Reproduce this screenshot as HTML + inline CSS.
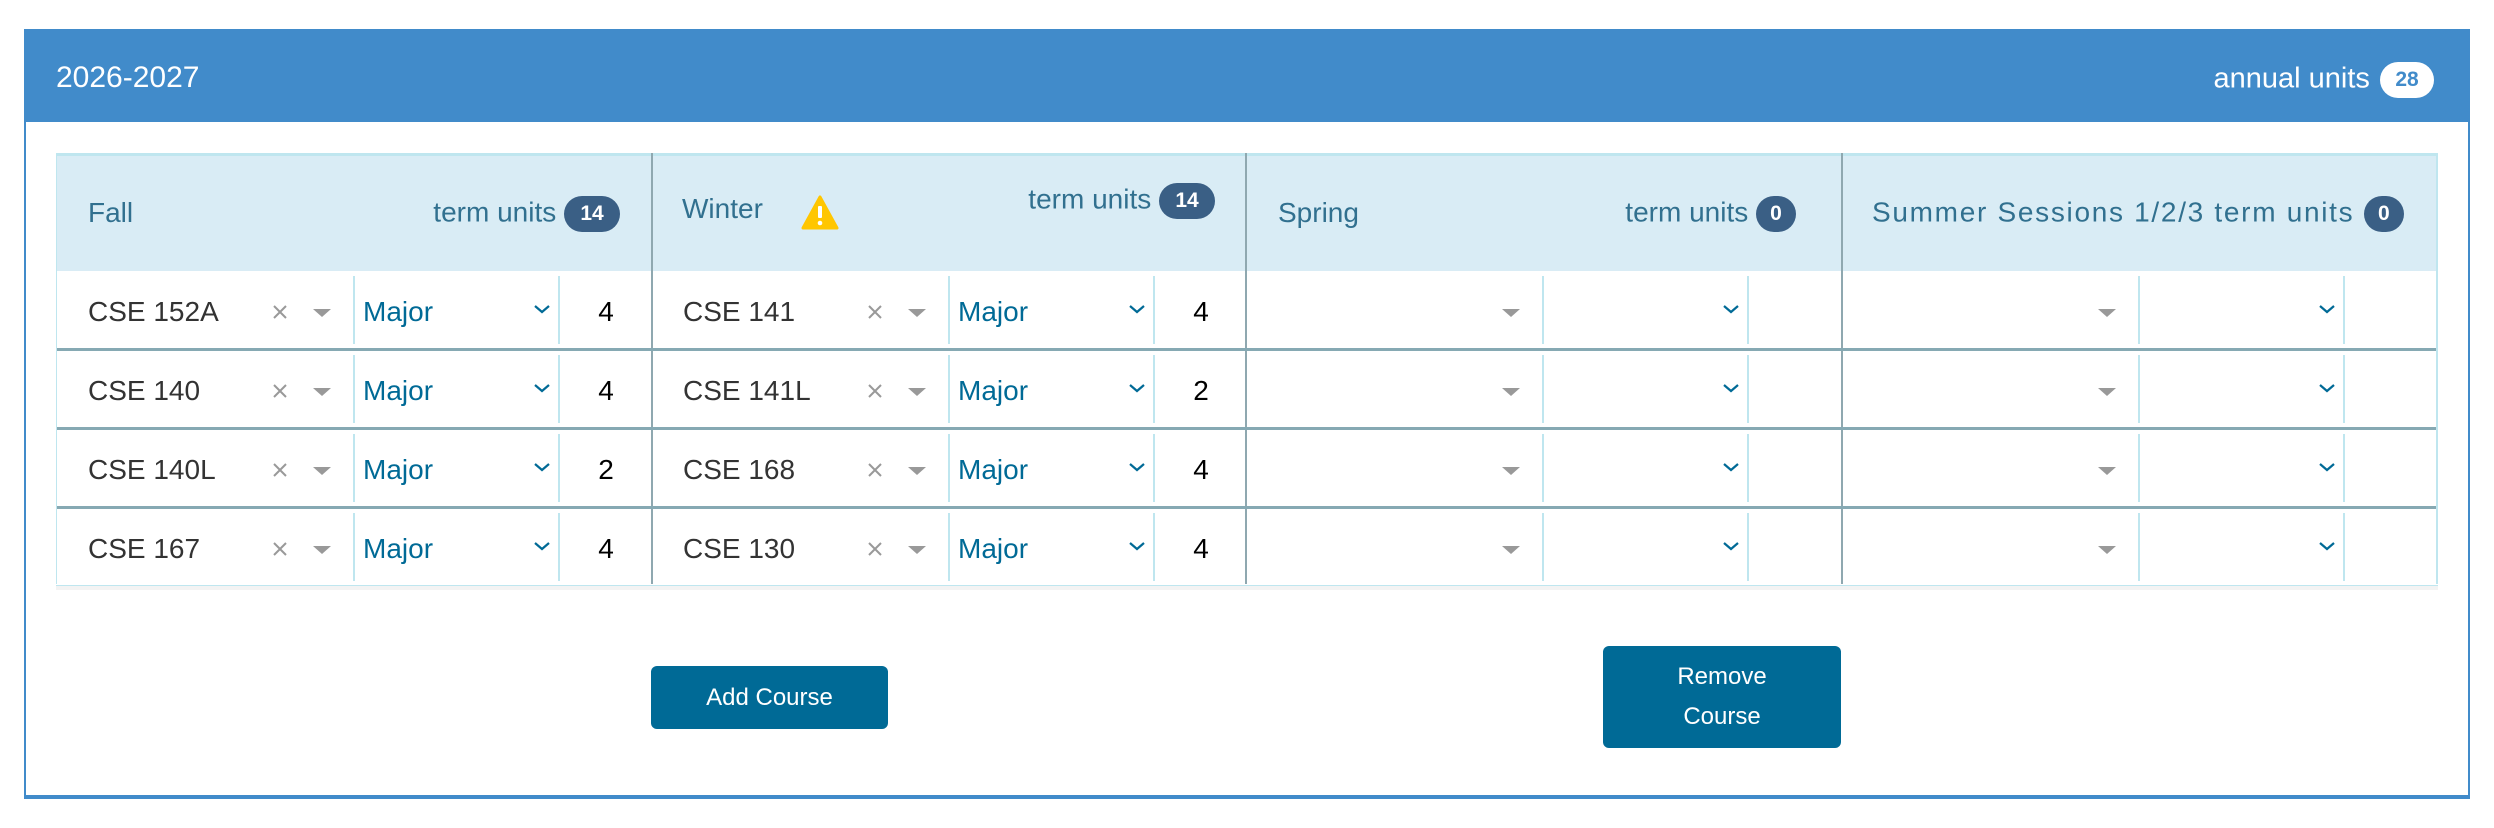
<!DOCTYPE html>
<html><head><meta charset="utf-8"><style>
*{box-sizing:border-box;margin:0;padding:0}
body{width:2494px;height:828px;background:#fff;font-family:"Liberation Sans",sans-serif;position:relative;overflow:hidden}
.a{position:absolute}
.panel{left:24px;top:29px;width:2446px;height:770px;border:2px solid #418bca;border-top:none;border-bottom:4px solid #418bca}
.hdr{left:24px;top:29px;width:2446px;height:93px;background:#418bca;color:#fff}
.badge{display:inline-block;border-radius:18px;font-weight:bold;font-size:21px;text-align:center;line-height:36px;height:36px;min-width:28px;padding:0 8px;vertical-align:middle;letter-spacing:0}
.dk{background:#3a5f85;color:#fff}
.th{background:#d9ecf5;color:#31708f;font-size:28px;white-space:nowrap}
.cell{font-size:28px}
.crs{color:#333}
.maj{color:#006a96}
.num{color:#000}
.tri{width:0;height:0;border-left:9px solid transparent;border-right:9px solid transparent;border-top:8px solid #999}
.btn{background:#006a96;color:#fff;border-radius:6px;font-size:24px;text-align:center}
</style></head><body>
<div class="a panel"></div>
<div class="a hdr">
  <div class="a" style="left:32px;top:32px;font-size:30px">2026-2027</div>
  <div class="a" style="right:36px;top:33px;font-size:29px">annual units <span class="badge" style="background:#fff;color:#418bca;margin-left:2px;min-width:54px">28</span></div>
</div>
<div class="a th" style="left:56px;top:153px;width:2382px;height:118px;border-top:3px solid #bfe6ef;border-left:1px solid #bfe6ef;border-right:2px solid #bfe6ef"></div>
<div class="a" style="left:651px;top:153px;width:2px;height:431px;background:#8fa8b0"></div>
<div class="a" style="left:1245px;top:153px;width:2px;height:431px;background:#8fa8b0"></div>
<div class="a" style="left:1841px;top:153px;width:2px;height:431px;background:#8fa8b0"></div>
<div class="a th" style="left:88px;top:197px;background:none">Fall</div>
<div class="a th" style="right:1874px;top:196px;background:none">term units <span class="badge dk" style="width:56px">14</span></div>
<div class="a th" style="left:682px;top:193px;background:none">Winter</div>
<svg class="a" style="left:801px;top:195px" width="38" height="35" viewBox="0 0 38 35"><path d="M19 2 L36 33 L2 33 Z" fill="#ffc600" stroke="#ffc600" stroke-width="3" stroke-linejoin="round"/><rect x="17" y="11" width="4" height="12" rx="1" fill="#fff"/><circle cx="19" cy="28" r="2.3" fill="#fff"/></svg>
<div class="a th" style="right:1279px;top:183px;background:none">term units <span class="badge dk" style="width:56px">14</span></div>
<div class="a th" style="left:1278px;top:197px;background:none">Spring</div>
<div class="a th" style="right:698px;top:196px;background:none">term units <span class="badge dk" style="padding:0;min-width:40px">0</span></div>
<div class="a th" style="left:1872px;top:196px;background:none;letter-spacing:1.7px">Summer Sessions 1/2/3 term units <span class="badge dk" style="padding:0;min-width:40px">0</span></div>
<div id="rows"></div>
<script>
var data=[[["CSE 152A",4],["CSE 141",4]],[["CSE 140",4],["CSE 141L",2]],[["CSE 140L",2],["CSE 168",4]],[["CSE 167",4],["CSE 130",4]]];
var tops=[270,349,428,507],h='';
var cols=[56,651,1245,1841];
for(var r=0;r<4;r++){var t=tops[r];
 h+='<div class="a" style="left:56px;top:'+(t+78)+'px;width:2382px;height:3px;background:'+(r<3?'#86a9b3':'#bfe6ef')+'"></div>';
 for(var c=0;c<4;c++){var L=cols[c];
  h+='<div class="a" style="left:'+(L+297)+'px;top:'+(t+6)+'px;width:2px;height:68px;background:#bfe6ef"></div>';
  h+='<div class="a" style="left:'+(L+502)+'px;top:'+(t+6)+'px;width:2px;height:68px;background:#bfe6ef"></div>';
  h+='<div class="a tri" style="left:'+(L+257)+'px;top:'+(t+39)+'px"></div>';
  h+='<svg class="a" style="left:'+(L+477)+'px;top:'+(t+34)+'px" width="18" height="10"><path d="M2 2 L9 8 L16 2" fill="none" stroke="#006a96" stroke-width="2.2"/></svg>';
  if(c<2){var d=data[r][c];
   h+='<div class="a cell crs" style="left:'+(L+32)+'px;top:'+(t+26)+'px">'+d[0]+'</div>';
   h+='<svg class="a" style="left:'+(L+217)+'px;top:'+(t+35)+'px" width="14" height="14"><path d="M1 1 L13 13 M13 1 L1 13" stroke="#999" stroke-width="2"/></svg>';
   h+='<div class="a cell maj" style="left:'+(L+307)+'px;top:'+(t+26)+'px">Major</div>';
   h+='<div class="a cell num" style="left:'+(L+504)+'px;width:92px;text-align:center;top:'+(t+26)+'px">'+d[1]+'</div>';
  }
 }
}
h+='<div class="a" style="left:56px;top:270px;width:1px;height:314px;background:#bfe6ef"></div><div class="a" style="left:2436px;top:270px;width:2px;height:314px;background:#bfe6ef"></div>';
h+='<div class="a" style="left:56px;top:586px;width:2382px;height:4px;background:#f3f3f3"></div>';
document.getElementById('rows').innerHTML=h;
</script>
<div class="a btn" style="left:651px;top:666px;width:237px;height:63px;line-height:63px">Add Course</div>
<div class="a btn" style="left:1603px;top:646px;width:238px;height:102px;padding-top:11px;line-height:40px">Remove<br>Course</div>
</body></html>
